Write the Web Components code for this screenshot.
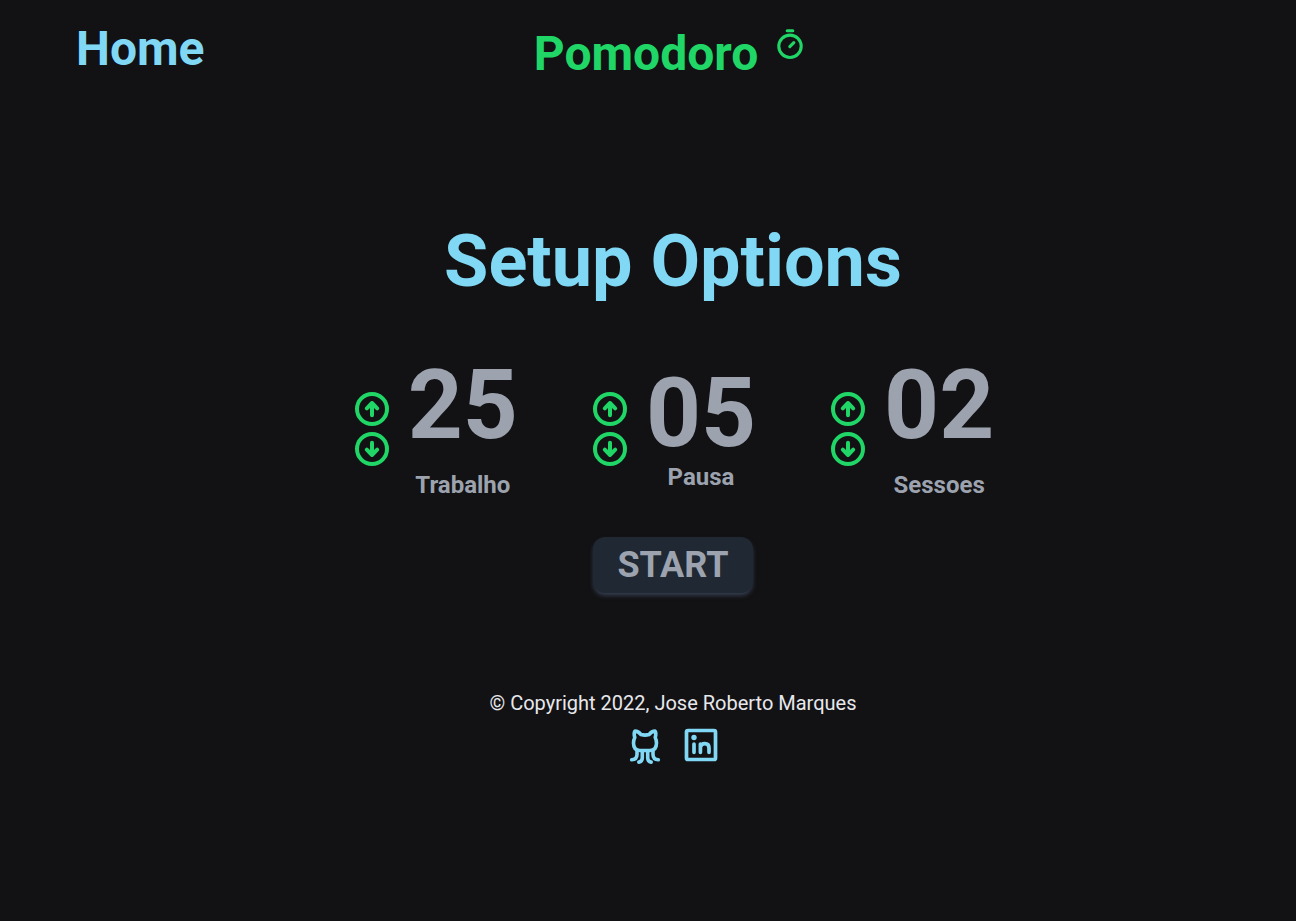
<!DOCTYPE html>
<html lang="pt-BR">
<head>
<meta charset="utf-8">
<meta name="viewport" content="width=device-width, initial-scale=1">
<title>Pomodoro</title>
<style>
  body {
    margin: 0;
    min-height: 100vh;
    background: #121214;
    font-family: Roboto, sans-serif;
    --blue: #81d8f5;
    --green: #1fd666;
    --gray: #9ca3af;
  }
</style>
</head>
<body>
<pomodoro-app></pomodoro-app>
<script>
const define = (name, html, setup) => {
  const template = document.createElement('template');
  template.innerHTML = html;
  customElements.define(name, class extends HTMLElement {
    constructor() {
      super();
      this.attachShadow({ mode: 'open' }).append(template.content.cloneNode(true));
    }
    connectedCallback() { if (setup) setup(this, this.shadowRoot); }
  });
};

define('site-header', `
  <style>
    :host { display: block; }
    header { display: grid; grid-template-columns: 1fr auto 1fr; align-items: start; padding: 25px 32px 0 76px; font-size: 48px; line-height: 48px; font-weight: 700; }
    a { color: var(--blue); text-decoration: none; justify-self: start; }
    .brand { display: flex; gap: 16px; align-items: start; color: var(--green); padding-top: 4px; }
    h1 { margin: 0; font: inherit; padding-top: 1px; }
    svg { width: 32px; height: 32px; display: block; }
  </style>
  <header>
    <a href="#">Home</a>
    <div class="brand">
      <h1>Pomodoro</h1>
      <svg viewBox="0 0 32 32" fill="none" stroke="currentColor" stroke-width="3.1" aria-hidden="true">
        <circle cx="16" cy="17.300" r="11.200"/><path d="M13.200 1.700h5.600M15.800 17.700l4-4" stroke-linecap="round"/>
      </svg>
    </div>
  </header>`);

define('time-setting', `
  <style>
    :host { display: flex; align-items: center; gap: 16px; color: var(--gray); font-weight: 700; }
    .steps { display: flex; flex-direction: column; }
    button { all: unset; cursor: pointer; color: var(--green); }
    svg { display: block; width: 40px; height: 40px; }
    .reading { display: flex; flex-direction: column; align-items: center; gap: var(--reading-gap, 16px); }
    output { font-size: 96px; line-height: 96px; }
    label { font-size: 24px; line-height: 32px; }
  </style>
  <div class="steps">
    <button type="button" class="up" aria-label="Aumentar">
      <svg viewBox="0 0 40 40" fill="none" stroke="currentColor" stroke-width="4"><circle cx="20" cy="20" r="15"/><path d="M20 26.300V14M14.800 19.300L20 14l5.200 5.300" stroke-linecap="round" stroke-linejoin="round"/></svg>
    </button>
    <button type="button" class="down" aria-label="Diminuir">
      <svg viewBox="0 0 40 40" fill="none" stroke="currentColor" stroke-width="4"><circle cx="20" cy="20" r="15"/><path d="M20 13.700V26M14.800 20.700L20 26l5.200-5.300" stroke-linecap="round" stroke-linejoin="round"/></svg>
    </button>
  </div>
  <div class="reading">
    <output id="value"></output>
    <label for="value"><slot></slot></label>
  </div>`, (host, root) => {
    const out = root.querySelector('output');
    let value = Number(host.getAttribute('value'));
    const show = () => { out.textContent = String(value).padStart(2, '0'); };
    root.querySelector('.up').onclick = () => { value++; show(); };
    root.querySelector('.down').onclick = () => { value = Math.max(1, value - 1); show(); };
    show();
  });

define('start-button', `
  <style>
    :host { display: block; }
    button { display: block; border: 0; padding: 8px 24px; border-radius: 12px; background: #1f2833; color: var(--gray); font: 700 36px/40px Roboto, sans-serif; box-shadow: 0 3px 5px -1px #3b465c; cursor: pointer; }
  </style>
  <button type="button"><slot></slot></button>`);

define('setup-panel', `
  <style>
    :host { display: flex; flex-direction: column; align-items: center; }
    h2 { margin: 0 0 59px; color: var(--blue); font-size: 72px; line-height: 72px; font-weight: 700; }
    .settings { display: flex; justify-content: center; align-items: center; gap: 72px; margin-bottom: 36px; }
    .compact { --reading-gap: 0; }
  </style>
  <h2>Setup Options</h2>
  <div class="settings">
    <time-setting value="25">Trabalho</time-setting>
    <time-setting value="5" class="compact">Pausa</time-setting>
    <time-setting value="2">Sessoes</time-setting>
  </div>
  <start-button>START</start-button>`);

define('site-footer', `
  <style>
    :host { display: block; }
    footer { display: flex; flex-direction: column; align-items: center; gap: 8px; color: #e8e8ec; font-size: 20px; line-height: 28px; }
    p { margin: 0; }
    nav { display: flex; gap: 16px; }
    a { color: var(--blue); }
    svg { display: block; width: 40px; height: 40px; }
  </style>
  <footer>
    <p>© Copyright 2022, Jose Roberto Marques</p>
    <nav>
      <a href="#" aria-label="GitHub">
        <svg viewBox="0 0 40 40" fill="none" stroke="currentColor" stroke-width="3.6" stroke-linecap="round" stroke-linejoin="round">
          <path d="M15 25.500C10.500 25.500 8.500 22.500 8.500 18C8.500 15.500 9 14 9.800 12.500C9 10 9 7.500 10 6.100C12.500 6.100 14.500 7.700 16 9.600C18.500 10.200 21.500 10.200 24 9.600C25.500 7.700 27.500 6.100 30 6.100C31 7.500 31 10 30.200 12.500C31 14 31.500 15.500 31.500 18C31.500 22.500 29.500 25.500 25 25.500Z"/>
          <path d="M12 26V29.500C12 33 10.500 34.600 6.700 34.800M17.300 26.500V33C17.300 35.500 16 36.800 13.800 37.100M22.700 26.500V33C22.700 35.500 24 36.800 26.200 37.100M28 26V29.500C28 33 29.500 34.600 33.300 34.800"/>
        </svg>
      </a>
      <a href="#" aria-label="LinkedIn">
        <svg viewBox="0 0 40 40" fill="none" stroke="currentColor" stroke-width="3.700">
          <rect x="5.500" y="5.500" width="29" height="29" rx="1.500"/>
          <circle cx="13" cy="12.500" r="2.700" fill="currentColor" stroke="none"/>
          <path d="M13 19v8.300M19.400 27.300V19M19.400 22c.5-2.300 2-3.300 4.400-3.300c2.700 0 4.200 1.600 4.200 4.300v4.300" stroke-linecap="round" stroke-linejoin="round"/>
        </svg>
      </a>
    </nav>
  </footer>`);

define('pomodoro-app', `
  <style>
    :host { display: block; }
    main { padding: 148px 0 96px 50px; }
    .foot { padding-left: 50px; }
  </style>
  <site-header></site-header>
  <main><setup-panel></setup-panel></main>
  <site-footer class="foot"></site-footer>`);
</script>
</body>
</html>
